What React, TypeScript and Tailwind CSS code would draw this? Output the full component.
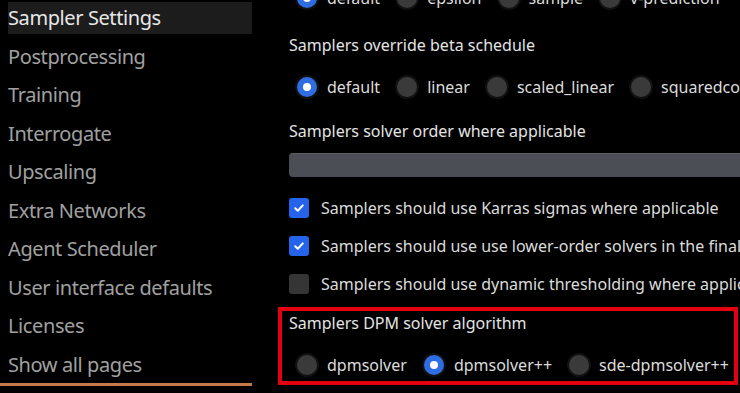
import React from 'react';

const navItems = [
  'Sampler Settings',
  'Postprocessing',
  'Training',
  'Interrogate',
  'Upscaling',
  'Extra Networks',
  'Agent Scheduler',
  'User interface defaults',
  'Licenses',
  'Show all pages',
];

type RadioProps = { label: string; checked?: boolean };

const Radio: React.FC<RadioProps> = ({ label, checked }) => (
  <div className="flex items-center gap-2.5">
    {checked ? (
      <span className="w-5 h-5 rounded-full bg-[#2f6de3] flex items-center justify-center shadow-[0_0_0_2px_#111]">
        <span className="w-2 h-2 rounded-full bg-white" />
      </span>
    ) : (
      <span className="w-5 h-5 rounded-full bg-[#3a3a3a] shadow-[0_0_0_2px_#111]" />
    )}
    <span className="text-[#dcdcdc] text-base">{label}</span>
  </div>
);

const RadioRow: React.FC<{ items: string[]; selected: number; className?: string }> = ({ items, selected, className }) => (
  <div className={`h-6 flex items-center gap-[17px] pl-2 whitespace-nowrap ${className ?? ''}`}>
    {items.map((it, i) => (
      <Radio key={it} label={it} checked={i === selected} />
    ))}
  </div>
);

const Checkbox: React.FC<{ label: string; checked?: boolean; className?: string }> = ({ label, checked, className }) => (
  <div className={`h-6 flex items-center gap-3 whitespace-nowrap ${className ?? ''}`}>
    {checked ? (
      <span className="w-5 h-5 shrink-0 rounded-[3px] bg-[#2563eb] flex items-center justify-center">
        <svg width="12" height="12" viewBox="0 0 12 12" fill="none">
          <path d="M2.2 6.3 L4.8 8.8 L9.8 3.4" stroke="white" strokeWidth="2" strokeLinecap="round" strokeLinejoin="round" />
        </svg>
      </span>
    ) : (
      <span className="w-5 h-5 shrink-0 rounded-[3px] bg-[#353535]" />
    )}
    <span className="text-[#dcdcdc] text-base">{label}</span>
  </div>
);

export default function App() {
  return (
    <div className="w-[740px] h-[393px] bg-black overflow-hidden flex font-['Noto_Sans',sans-serif]">
      {/* Sidebar */}
      <div className="w-[252px] shrink-0 flex flex-col">
        <div className="pl-2 -mt-[1px] flex flex-col">
          {navItems.map((item, i) => (
            <div key={item} className="h-[38.5px] flex items-center">
              {i === 0 ? (
                <div className="w-full h-8 bg-[#1c1c1c] flex items-center text-[20px] tracking-[-0.4px] text-[#e8e8e8]">{item}</div>
              ) : (
                <div className="text-[20px] tracking-[-0.4px] text-[#a0a0a0]">{item}</div>
              )}
            </div>
          ))}
        </div>
        <div className="h-[3px] bg-[#c47a4a] -mt-[1px]" />
      </div>

      {/* Settings */}
      <div className="flex-1 min-w-0 pl-[37px] flex flex-col -mt-[14px]">
        <RadioRow items={['default', 'epsilon', 'sample', 'v-prediction']} selected={0} />

        <div className="h-6 mt-[23px] flex items-center text-base text-[#e4e4e4] whitespace-nowrap">
          Samplers override beta schedule
        </div>
        <RadioRow className="mt-[18px]" items={['default', 'linear', 'scaled_linear', 'squaredcos_cap_v2']} selected={0} />

        <div className="h-6 mt-5 flex items-center text-base text-[#e4e4e4] whitespace-nowrap">
          Samplers solver order where applicable
        </div>
        <div className="h-6 mt-[10px] w-[480px] rounded bg-[#4b4f55] border-t border-[#5a5e64]" />

        <Checkbox className="mt-[19px]" checked label="Samplers should use Karras sigmas where applicable" />
        <Checkbox className="mt-[14px]" checked label="Samplers should use use lower-order solvers in the final steps" />
        <Checkbox className="mt-[14px]" label="Samplers should use dynamic thresholding where applicable" />

        <div className="mt-[11px] -ml-[11px] w-[460px] border-4 border-[#e3000f] pl-[7px] pb-1">
          <div className="h-6 flex items-center text-base text-[#e4e4e4] whitespace-nowrap">
            Samplers DPM solver algorithm
          </div>
          <RadioRow className="mt-[18px]" items={['dpmsolver', 'dpmsolver++', 'sde-dpmsolver++']} selected={1} />
        </div>
      </div>
    </div>
  );
}
